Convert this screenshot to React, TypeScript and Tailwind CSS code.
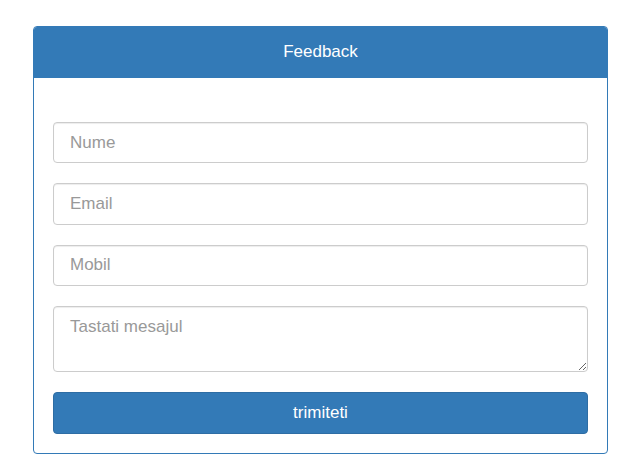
export default function App() {
  const font = { fontFamily: '"Liberation Sans", Arial, sans-serif' }
  const field =
    "block w-full h-[41.3px] px-4 border border-[#ccc] rounded-[4px] bg-white text-[17px] text-[#555] placeholder:text-[#999] shadow-[inset_0_1px_1px_rgba(0,0,0,0.075)] outline-none"

  return (
    <div className="min-h-screen bg-white pt-[26px] pl-[33px]" style={font}>
      <div className="w-[575px] border border-[#337ab7] rounded-[4px] bg-white">
        <div className="h-[51px] bg-[#337ab7] rounded-t-[3px] flex items-center justify-center text-white text-[17px] pb-[2px]">
          Feedback
        </div>

        <form className="px-[19px] pt-[44px] pb-[19px] flex flex-col gap-[20px]">
          <input type="text" placeholder="Nume" className={field} />
          <input type="email" placeholder="Email" className={field} />
          <input type="text" placeholder="Mobil" className={field} />
          <textarea
            placeholder="Tastati mesajul"
            className="block w-full h-[66px] px-4 pt-[8px] leading-[24px] border border-[#ccc] rounded-[4px] bg-white text-[17px] text-[#555] placeholder:text-[#999] shadow-[inset_0_1px_1px_rgba(0,0,0,0.075)] outline-none"
          />
          <button
            type="button"
            className="h-[42px] w-full rounded-[4px] bg-[#337ab7] border border-[#2e6da4] text-white text-[17px]"
          >
            trimiteti
          </button>
        </form>
      </div>
    </div>
  )
}
